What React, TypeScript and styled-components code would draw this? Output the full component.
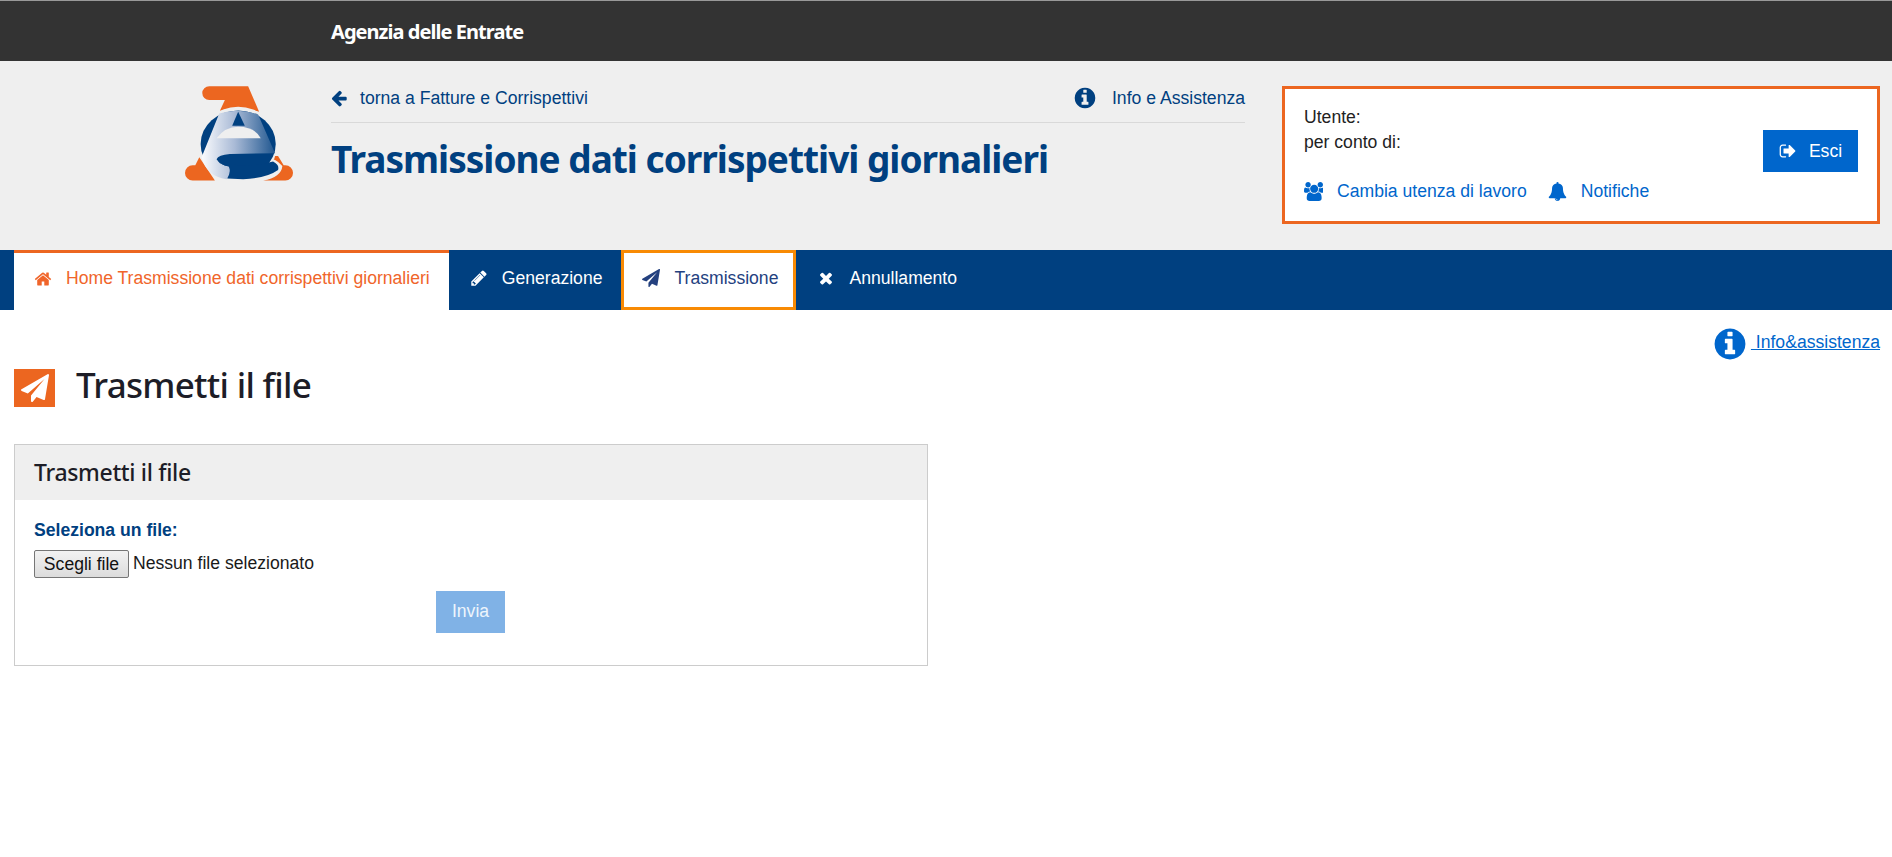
import React from "react";
import styled, { createGlobalStyle } from "styled-components";

const Global = createGlobalStyle`
  html, body { margin: 0; padding: 0; background: #fff; }
  body { font-family: "Liberation Sans", Arial, sans-serif; font-size: 17.6px; color: #1a1a1a; }
`;

const heading = `"Noto Sans", "Open Sans", sans-serif`;
const navy = "#004080";
const orange = "#ec6620";
const blue = "#0066cc";

const paths = {
  arrowLeft: "M1664 896v128q0 53-32.5 90.5t-84.5 37.5h-704l293 294q38 36 38 90t-38 90l-75 76q-37 37-90 37-52 0-91-37l-651-652q-37-37-37-90 0-52 37-91l651-650q38-38 91-38 52 0 90 38l75 74q38 38 38 91t-38 91l-293 293h704q52 0 84.5 37.5t32.5 90.5z",
  info: "M1152 1376v-160q0-14-9-23t-23-9h-96v-512q0-14-9-23t-23-9h-320q-14 0-23 9t-9 23v160q0 14 9 23t23 9h96v320h-96q-14 0-23 9t-9 23v160q0 14 9 23t23 9h448q14 0 23-9t9-23zm-128-896v-160q0-14-9-23t-23-9h-192q-14 0-23 9t-9 23v160q0 14 9 23t23 9h192q14 0 23-9t9-23zm640 416q0 209-103 385.5t-279.5 279.5-385.5 103-385.5-103-279.5-279.5-103-385.5 103-385.5 279.5-279.5 385.5-103 385.5 103 279.5 279.5 103 385.5z",
  users: "M593 896q-162 5-265 128h-134q-82 0-138-40.5t-56-118.5q0-353 124-353 6 0 43.5 21t97.5 42.5 119 21.5q67 0 133-23-5 37-5 66 0 139 81 256zm1071 637q0 120-73 189.5t-194 69.5h-874q-121 0-194-69.5t-73-189.5q0-53 3.5-103.5t14-109 26.5-108.5 43-97.5 62-81 85.5-53.5 111.5-20q10 0 43 21.5t73 48 107 48 135 21.5 135-21.5 107-48 73-48 43-21.5q61 0 111.5 20t85.5 53.5 62 81 43 97.5 26.5 108.5 14 109 3.5 103.5zm-1024-1277q0 106-75 181t-181 75-181-75-75-181 75-181 181-75 181 75 75 181zm704 384q0 159-112.5 271.5t-271.5 112.5-271.5-112.5-112.5-271.5 112.5-271.5 271.5-112.5 271.5 112.5 112.5 271.5zm576 225q0 78-56 118.5t-138 40.5h-134q-103-123-265-128 81-117 81-256 0-29-5-66 66 23 133 23 59 0 119-21.5t97.5-42.5 43.5-21q124 0 124 353zm-128-609q0 106-75 181t-181 75-181-75-75-181 75-181 181-75 181 75 75 181z",
  bell: "M912 1696q0-16-16-16-59 0-101.5-42.5t-42.5-101.5q0-16-16-16t-16 16q0 73 51.5 124.5t124.5 51.5q16 0 16-16zm816-288q0 52-38 90t-90 38h-448q0 106-75 181t-181 75-181-75-75-181h-448q-52 0-90-38t-38-90q50-42 91-88t85-119.5 74.5-158.5 50-206 19.5-260q0-152 117-282.5t307-158.5q-8-19-8-39 0-40 28-68t68-28 68 28 28 68q0 20-8 39 190 28 307 158.5t117 282.5q0 139 19.5 260t50 206 74.5 158.5 85 119.5 91 88z",
  signOut: "M704 1440q0 4 1 20t.5 26.5-3 23.5-10 19.5-20.5 6.5h-320q-119 0-203.5-84.5t-84.5-203.5v-704q0-119 84.5-203.5t203.5-84.5h320q13 0 22.5 9.5t9.5 22.5q0 4 1 20t.5 26.5-3 23.5-10 19.5-20.5 6.5h-320q-66 0-113 47t-47 113v704q0 66 47 113t113 47h312l11.5 1 11.5 3 8 5.5 7 9 2 13.5zm928-544q0 26-19 45l-544 544q-19 19-45 19t-45-19-19-45v-288h-448q-26 0-45-19t-19-45v-384q0-26 19-45t45-19h448v-288q0-26 19-45t45-19 45 19l544 544q19 19 19 45z",
  home: "M1472 992v480q0 26-19 45t-45 19h-384v-384h-256v384h-384q-26 0-45-19t-19-45v-480q0-1 .5-3t.5-3l575-474 575 474q1 2 1 6zm223-69l-62 74q-8 9-21 11h-3q-13 0-21-7l-692-577-692 577q-12 8-24 7-13-2-21-11l-62-74q-8-10-7-23.5t11-21.5l719-599q32-26 76-26t76 26l244 204v-195q0-14 9-23t23-9h192q14 0 23 9t9 23v408l219 182q10 8 11 21.5t-7 23.5z",
  pencil: "M491 1536l91-91-235-235-91 91v107h128v128h107zm523-928q0-22-22-22-10 0-17 7l-542 542q-7 7-7 17 0 22 22 22 10 0 17-7l542-542q7-7 7-17zm-54-192l416 416-832 832h-416v-416zm683 96q0 53-37 90l-166 166-416-416 166-165q36-38 90-38 53 0 91 38l235 234q37 39 37 91z",
  plane: "M1764 11q33 24 27 64l-256 1536q-5 29-32 45-14 8-31 8-11 0-24-5l-453-185-242 295q-18 23-49 23-13 0-22-4-19-7-30.5-23.5t-11.5-36.5v-349l864-1059-1069 925-395-162q-37-14-40-55-2-40 32-59l1664-960q15-9 32-9 20 0 36 11z",
  times: "M1490 1322q0 40-28 68l-136 136q-28 28-68 28t-68-28l-294-294-294 294q-28 28-68 28t-68-28l-136-136q-28-28-28-68t28-68l294-294-294-294q-28-28-28-68t28-68l136-136q28-28 68-28t68 28l294 294 294-294q28-28 68-28t68 28l136 136q28 28 28 68t-28 68l-294 294 294 294q28 28 28 68z",
};

const Icon = ({ name }: { name: keyof typeof paths }) => (
  <svg viewBox="0 0 1792 1792" fill="currentColor"><path d={paths[name]} /></svg>
);

const TopBar = styled.div`
  height: 60px; background: #333; border-top: 1px solid #999;
  padding-left: 331px; display: flex; align-items: center;
`;
const Brand = styled.span`
  font-family: ${heading}; font-weight: 700; font-size: 20px; letter-spacing: -0.95px; color: #fff;
`;
const Header = styled.header`
  height: 189px; background: #efefef; display: flex; align-items: flex-start;
`;
const LogoCol = styled.div`
  width: 331px; flex: none; padding: 25px 0 0 185px; box-sizing: border-box;
`;
const Middle = styled.div`
  width: 914px; flex: none; padding-top: 20px;
`;
const MiddleTop = styled.div`
  display: flex; justify-content: space-between; align-items: center; height: 34px; padding-bottom: 7px;
  border-bottom: 1px solid #d9d9d9; color: ${navy};
`;
const BackLink = styled.a`
  display: flex; align-items: center; gap: 12px; color: ${navy};
  svg { width: 18px; height: 18px; margin-left: -1px; }
`;
const InfoLink = styled.a`
  display: flex; align-items: center; gap: 15px; color: ${navy};
  svg { width: 24px; height: 24px; }
`;
const Title = styled.h1`
  margin: 0; font-family: ${heading}; font-weight: 700; font-size: 37px; line-height: 50px;
  letter-spacing: -1px; color: ${navy}; padding-top: 11px;
`;
const UserBox = styled.div`
  margin: 25px 0 0 37px; width: 598px; height: 138px; box-sizing: border-box;
  border: 3px solid ${orange}; background: #fff; padding: 16px 19px 0 19px;
  display: flex; flex-direction: column;
`;
const UserTop = styled.div`
  display: flex; justify-content: space-between; height: 69px;
`;
const UserLines = styled.div`
  line-height: 25px; color: #222;
`;
const Logout = styled.button`
  width: 95px; height: 42px; margin-top: 25px; background: ${blue}; color: #fff; border: 0;
  font: 17.6px "Liberation Sans", Arial, sans-serif; display: flex; align-items: center; justify-content: center; gap: 12px;
  svg { width: 18px; height: 18px; }
`;
const UserLinks = styled.div`
  display: flex; gap: 21px; margin-top: 7px;
`;
const UserLink = styled.a`
  display: flex; align-items: center; gap: 14px; color: ${blue};
  svg { width: 19px; height: 19px; }
`;
const Nav = styled.nav`
  height: 60px; background: ${navy}; padding-left: 14px; display: flex;
`;
const Tab = styled.a<{ $kind?: "home" | "focus" }>`
  box-sizing: border-box; height: 60px; display: flex; align-items: center; gap: 14px;
  padding: ${(p) => (p.$kind === "focus" ? "0 15px 0 18px" : p.$kind === "home" ? "0 19px 6px 20px" : "0 19px 4px 21px")};
  background: ${(p) => (p.$kind ? "#fff" : "transparent")};
  color: ${(p) => (p.$kind === "home" ? "#f0652a" : p.$kind === "focus" ? "#24417f" : "#fff")};
  border-top: ${(p) => (p.$kind === "home" ? `3px solid ${orange}` : "none")};
  ${(p) => (p.$kind === "focus" ? "border: 3px solid #f88a04; padding-bottom: 4px;" : "")}
  svg { width: 18px; height: 18px; flex: none; }
`;
const Main = styled.main`
  padding: 0 12px 0 14px;
`;
const HelpRow = styled.div`
  display: flex; justify-content: flex-end; padding-top: 16px; height: 35px;
`;
const HelpLink = styled.a`
  display: flex; align-items: center; color: ${blue};
  svg { width: 36px; height: 36px; }
`;
const HelpText = styled.span`
  text-decoration: underline; white-space: pre; margin: -2px 0 0 3px;
`;
const PageHead = styled.div`
  display: flex; align-items: center; gap: 21px; margin-top: 8px; height: 38px;
`;
const HeadIcon = styled.span`
  width: 41px; height: 38px; background: ${orange}; color: #fff; display: flex; align-items: center; justify-content: center;
  svg { width: 28px; height: 28px; }
`;
const PageTitle = styled.h2`
  margin: 0; font-family: ${heading}; font-weight: 500; font-size: 35px; letter-spacing: -0.7px; color: #1d1d27; line-height: 38px; padding-bottom: 6px;
`;
const Card = styled.section`
  width: 914px; height: 222px; box-sizing: border-box; margin-top: 37px; border: 1px solid #ccc; display: flex; flex-direction: column;
`;
const CardHead = styled.div`
  height: 53px; padding: 0 0 2px 19px; flex: none; background: #efefef; display: flex; align-items: center;
  font-family: ${heading}; font-weight: 500; font-size: 23px; letter-spacing: -0.33px; color: #1d1d27;
`;
const CardBody = styled.div`
  padding: 20px 19px 0; display: flex; flex-direction: column;
`;
const FieldLabel = styled.label`
  font-weight: 700; line-height: 20px; color: ${navy};
`;
const FileRow = styled.div`
  display: flex; align-items: center; gap: 4px; margin-top: 10px; height: 28px;
`;
const FileButton = styled.button`
  width: 95px; height: 28px; box-sizing: border-box; border: 1px solid #767676; border-radius: 2px;
  background: linear-gradient(#f2f2f2, #dcdcdc); font: 17.6px "Liberation Sans", Arial, sans-serif; color: #111; padding: 0;
`;
const FileState = styled.span`
  color: #1a1a1a; margin-top: -1px;
`;
const Send = styled.button`
  align-self: center; margin: 13px 1px 0 0; width: 69px; height: 42px; background: #80b2e6; color: #eef5fc; border: 0; padding: 0 0 2px;
  font: 17.6px "Liberation Sans", Arial, sans-serif;
`;

const Logo = () => (
  <svg width="108" height="95" viewBox="45 48 325 285">
    <defs>
      <linearGradient id="eg" x1="0" x2="1" y1="0" y2="0">
        <stop offset="0" stopColor="#fbfcfe" />
        <stop offset="0.45" stopColor="#a9bad6" />
        <stop offset="1" stopColor="#1f568f" />
      </linearGradient>
    </defs>
    <path fill="#ec6620" d="M118 48H235L268 125Q205 105 150 122L165 90H118A21 21 0 0 1 118 48Z" />
    <path fill="#ec6620" d="M88 262L135 332H68A23 23 0 0 1 68 286H76Z" />
    <path fill="#ec6620" d="M275 258H325L342 286H347A23 23 0 0 1 347 332H280Q335 322 338 288Q320 265 275 258Z" />
    <ellipse cx="205" cy="222" rx="118" ry="112" fill="#efefef" />
    <ellipse cx="205" cy="222" rx="113" ry="101" fill="#004080" />
    <path fill="url(#eg)" d="M148 130Q205 112 265 133L316 250L180 252Q145 255 140 268Q150 285 178 290Q184 315 170 328Q110 320 95 262Z" />
    <path fill="#004080" d="M205 125L225 167H187Z" />
    <path fill="#efefef" d="M140 205Q165 170 205 170Q255 170 273 205Z" />
    <path fill="#004080" d="M140 265L150 280Q240 295 310 275Q330 285 325 300Q290 325 220 328L172 326Q186 305 177 290Q150 285 140 265Z" />
  </svg>
);

export default function App() {
  return (
    <>
      <Global />
      <TopBar><Brand>Agenzia delle Entrate</Brand></TopBar>
      <Header>
        <LogoCol><Logo /></LogoCol>
        <Middle>
          <MiddleTop>
            <BackLink><Icon name="arrowLeft" />torna a Fatture e Corrispettivi</BackLink>
            <InfoLink><Icon name="info" />Info e Assistenza</InfoLink>
          </MiddleTop>
          <Title>Trasmissione dati corrispettivi giornalieri</Title>
        </Middle>
        <UserBox>
          <UserTop>
            <UserLines>Utente:<br />per conto di:</UserLines>
            <Logout><Icon name="signOut" />Esci</Logout>
          </UserTop>
          <UserLinks>
            <UserLink><Icon name="users" />Cambia utenza di lavoro</UserLink>
            <UserLink><Icon name="bell" />Notifiche</UserLink>
          </UserLinks>
        </UserBox>
      </Header>
      <Nav>
        <Tab $kind="home"><Icon name="home" />Home Trasmissione dati corrispettivi giornalieri</Tab>
        <Tab><Icon name="pencil" />Generazione</Tab>
        <Tab $kind="focus"><Icon name="plane" />Trasmissione</Tab>
        <Tab><Icon name="times" />Annullamento</Tab>
      </Nav>
      <Main>
        <HelpRow>
          <HelpLink><Icon name="info" /><HelpText> Info&amp;assistenza</HelpText></HelpLink>
        </HelpRow>
        <PageHead>
          <HeadIcon><Icon name="plane" /></HeadIcon>
          <PageTitle>Trasmetti il file</PageTitle>
        </PageHead>
        <Card>
          <CardHead>Trasmetti il file</CardHead>
          <CardBody>
            <FieldLabel>Seleziona un file:</FieldLabel>
            <FileRow><FileButton>Scegli file</FileButton><FileState>Nessun file selezionato</FileState></FileRow>
            <Send>Invia</Send>
          </CardBody>
        </Card>
      </Main>
    </>
  );
}
